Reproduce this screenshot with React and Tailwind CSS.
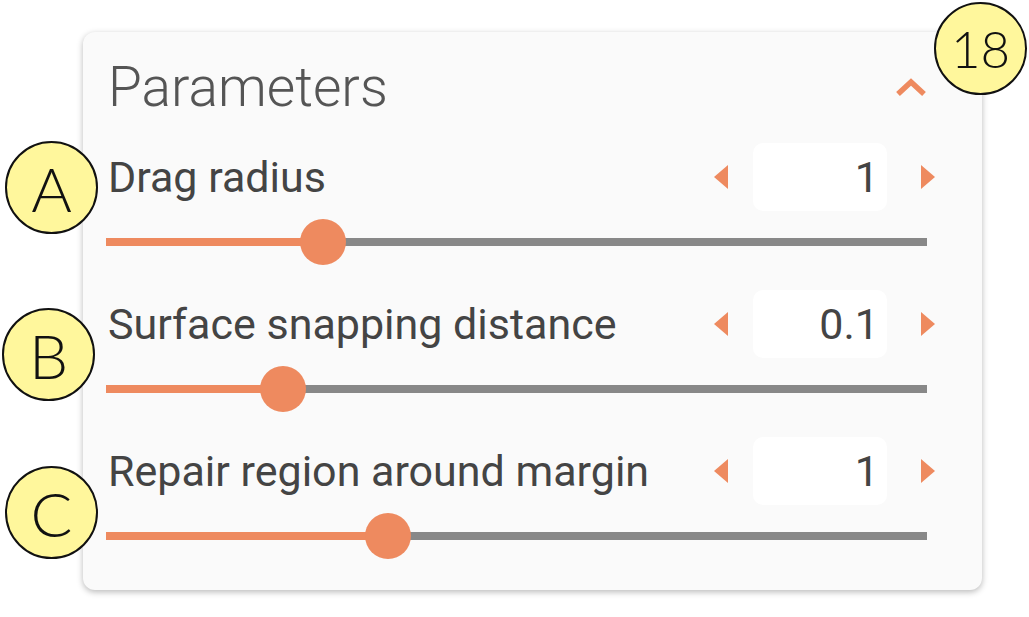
import React from "react";

const ORANGE = "#ee8a5f";

const params = [
  { label: "Drag radius", value: "1", pct: 26.4 },
  { label: "Surface snapping distance", value: "0.1", pct: 21.6 },
  { label: "Repair region around margin", value: "1", pct: 34.3 },
];

function Badge({ children, className, small }) {
  return (
    <div
      className={
        "absolute flex items-center justify-center w-[93px] h-[93px] rounded-full bg-[#fff79c] border-2 border-[#111] text-[#111] font-light leading-none " +
        (small ? "text-[51px] " : "text-[62px] ") +
        className
      }
      style={{ fontFamily: "Lato, 'Open Sans', sans-serif" }}
    >
      {children}
    </div>
  );
}

function Stepper({ value }) {
  return (
    <div className="flex items-center">
      <svg width="14" height="24" viewBox="0 0 14 24" aria-hidden="true">
        <path d="M14 0 L0 12 L14 24 Z" fill={ORANGE} />
      </svg>
      <div className="ml-[25px] w-[134px] h-[68px] rounded-[10px] bg-white flex items-center justify-end pr-[8px] text-[43px] text-[#444]">
        {value}
      </div>
      <svg className="ml-[34px]" width="14" height="24" viewBox="0 0 14 24" aria-hidden="true">
        <path d="M0 0 L14 12 L0 24 Z" fill={ORANGE} />
      </svg>
    </div>
  );
}

function Slider({ pct }) {
  return (
    <div className="relative h-[46px] mr-[8px] flex items-center">
      <div className="w-full h-[8px] bg-[#888]" />
      <div className="absolute left-0 h-[8px] bg-[#ee8a5f]" style={{ width: pct + "%" }} />
      <div
        className="absolute w-[46px] h-[46px] -ml-[23px] rounded-full bg-[#ee8a5f]"
        style={{ left: pct + "%" }}
      />
    </div>
  );
}

export default function App() {
  return (
    <div
      className="relative w-[1029px] h-[617px] bg-white pt-[32px] pl-[83px] overflow-hidden"
      style={{ fontFamily: "Roboto, 'Liberation Sans', sans-serif" }}
    >
      <div className="w-[899px] h-[558px] rounded-[12px] bg-[#fafafa] shadow-[0_2px_6px_rgba(0,0,0,0.28)] pt-[20px] pl-[23px] pr-[47px]">
        <div className="h-[70px] flex items-center justify-between pl-[2px] pr-[8px]">
          <span className="text-[55px] font-light text-[#555] leading-none">Parameters</span>
          <svg width="32" height="19" viewBox="0 0 32 19" aria-hidden="true">
            <polyline points="3,16 16,4 29,16" fill="none" stroke={ORANGE} strokeWidth="5.5" />
          </svg>
        </div>
        {params.map((p, i) => (
          <div key={p.label} className={i === 0 ? "mt-[20px]" : "mt-[24px]"}>
            <div className="h-[70px] flex items-center justify-between pl-[2px]">
              <span className="text-[43px] text-[#444] leading-none">{p.label}</span>
              <Stepper value={p.value} />
            </div>
            <div className="mt-[7px]">
              <Slider pct={p.pct} />
            </div>
          </div>
        ))}
      </div>

      <Badge small className="left-[934px] top-[2px]">18</Badge>
      <Badge className="left-[5px] top-[141px]">A</Badge>
      <Badge className="left-[2px] top-[308px]">B</Badge>
      <Badge className="left-[5px] top-[466px]">C</Badge>
    </div>
  );
}
